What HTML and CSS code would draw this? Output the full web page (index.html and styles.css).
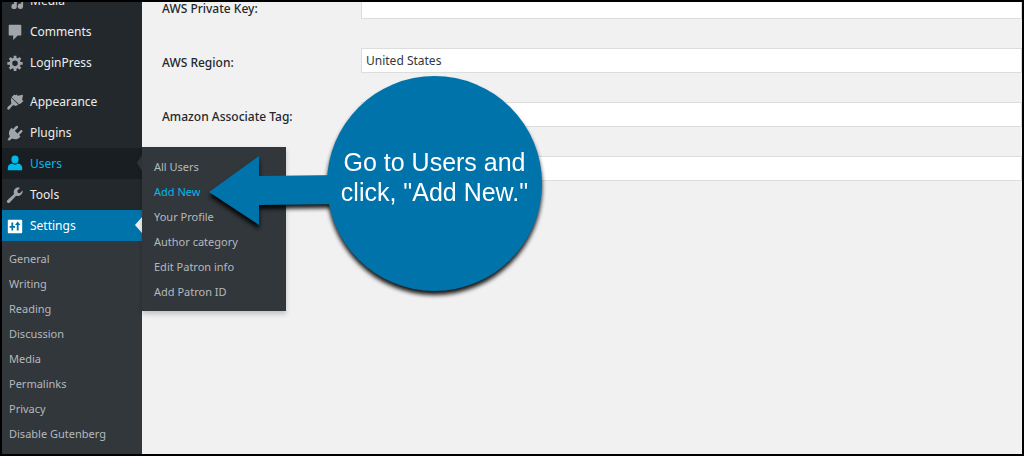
FILE: index.html
```html
<!DOCTYPE html>
<html lang="en">
<head>
    <meta charset="UTF-8">
    <meta name="viewport" content="width=device-width, initial-scale=1.0">
    <title>Settings</title>
    <link rel="stylesheet" href="styles.css">
</head>
<body>
    <nav class="admin-menu">
        <ul class="menu">
            <li>
                <a href="#">
                    <svg class="icon" viewBox="0 0 20 20"><path d="M2 1h8v3H4v4H2zM9 8h10v8a3 3 0 1 1-2-3v-3h-5v6a3 3 0 1 1-3-3z"/></svg>
                    Media
                </a>
            </li>
            <li>
                <a href="#">
                    <svg class="icon" viewBox="0 0 20 20"><path d="M4 2h12q1 0 1 1v10q0 1-1 1h-3l-5 5v-5H4q-1 0-1-1V3q0-1 1-1z"/></svg>
                    Comments
                </a>
            </li>
            <li>
                <a href="#">
                    <svg class="icon" viewBox="0 0 20 20"><path fill-rule="evenodd" d="M18.500 12h-2.400l-.7 1.600 1.700 1.700-2.200 2.200-1.700-1.700-1.600.7v2.400H8.500v-2.400l-1.600-.7-1.700 1.700L3 15.300l1.700-1.700L4 12H1.500V8.800H4l.7-1.600L3 5.500l2.200-2.200L6.900 5l1.600-.7V1.900h3.100v2.400l1.600.7 1.700-1.700 2.200 2.200-1.700 1.700.7 1.600h2.400zM10 13.500a3.100 3.100 0 1 0 0-6.200 3.100 3.100 0 0 0 0 6.200z"/></svg>
                    LoginPress
                </a>
            </li>
            <li class="separator"></li>
            <li>
                <a href="#">
                    <svg class="icon" viewBox="0 0 20 20"><path d="M14.500 12.500 6.100 4.600l3.100-3 1 1 1.500-1 1.300 1.500 6-1.100-1.100 5.500 1.500 1.500-3.400 3zM6 5.500l7.800 7.500-1.800 1c-1.500 1-3-.5-4-.3-1.200.3-2.700 3.300-4.500 4.600-1 .7-2.800-.8-2-2 1.300-2 4.200-3.600 4.500-4.800.2-1.200-1.300-2.500 0-6z"/></svg>
                    Appearance
                </a>
            </li>
            <li>
                <a href="#">
                    <svg class="icon" viewBox="0 0 20 20"><path d="M13 4.500 9.800 7.600l3 2.900 3.100-3.200c.7-.7 1.700-.7 2.100-.2.500.5.400 1.400-.3 2.100l-3.100 3.100 1.500 1.500c-2.500 3-6 4.200-9.200 2.300l-3.400 2.600-1.800-1.600 2.700-3.500C2.300 10.500 3.400 7 6.200 4.200l1.500 1.500 3.100-3.200c.7-.7 1.600-.8 2.200-.2.500.5.700 1.500 0 2.200z"/></svg>
                    Plugins
                </a>
            </li>
            <li class="open">
                <a href="#">
                    <svg class="icon" viewBox="0 0 20 20"><ellipse cx="10" cy="5" rx="4" ry="4.500"/><path d="M7 9.500q3 2.500 6 0 5 1 5 5V17H2v-2.500q0-4 5-5z"/></svg>
                    Users
                </a>
                <ul class="flyout">
                    <li><a href="#">All Users</a></li>
                    <li><a href="#" class="active">Add New</a></li>
                    <li><a href="#">Your Profile</a></li>
                    <li><a href="#">Author category</a></li>
                    <li><a href="#">Edit Patron info</a></li>
                    <li><a href="#">Add Patron ID</a></li>
                </ul>
            </li>
            <li>
                <a href="#">
                    <svg class="icon" viewBox="0 0 20 20"><path d="M16.700 9.800c-1.500 1.500-3.700 1.800-5.500 1l-7 7.400c-.8.800-2 .8-2.700 0s-.7-1.800 0-2.500l7.500-6.900c-.9-1.900-.5-4.100 1-5.600S13.700 1.300 15.500 2.200l-3 3 .6 2.300 2.400.6 2.800-3c.6 1.500-.1 3.300-1.600 4.700z"/></svg>
                    Tools
                </a>
            </li>
            <li class="current">
                <a href="#">
                    <svg class="icon" viewBox="0 0 20 20"><path fill-rule="evenodd" d="M3 3h14q1 0 1 1v13q0 1-1 1H3q-1 0-1-1V4q0-1 1-1zM6 6v4H4v2h2v3h2v-3h2v-2H8V6zM12 15h2V9h2l-3-4-3 4h2z"/></svg>
                    Settings
                </a>
            </li>
        </ul>
        <ul class="submenu">
            <li><a href="#">General</a></li>
            <li><a href="#">Writing</a></li>
            <li><a href="#">Reading</a></li>
            <li><a href="#">Discussion</a></li>
            <li><a href="#">Media</a></li>
            <li><a href="#">Permalinks</a></li>
            <li><a href="#">Privacy</a></li>
            <li><a href="#">Disable Gutenberg</a></li>
        </ul>
    </nav>

    <main class="content">
        <form>
            <div class="row">
                <label for="private-key">AWS Private Key:</label>
                <input type="text" id="private-key">
            </div>
            <div class="row">
                <label for="region">AWS Region:</label>
                <select id="region">
                    <option>United States</option>
                </select>
            </div>
            <div class="row">
                <label for="tag">Amazon Associate Tag:</label>
                <input type="text" id="tag">
            </div>
            <div class="row">
                <label for="extra"></label>
                <input type="text" id="extra" aria-label="Additional value">
            </div>
        </form>
    </main>

    <!-- tutorial bubble over the page -->
    <div class="callout">
        <svg class="arrow" viewBox="0 0 130 72"><path d="M0 37 50 1v20l80-1v29l-80 1v20z"/></svg>
        <p class="bubble">Go to Users and<br>click, "Add New."</p>
    </div>
</body>
</html>
```
FILE: styles.css
```css
* {
    box-sizing: border-box;
}

body {
    font-family: "Noto Sans", "Open Sans", sans-serif;
    font-size: 12px;
    margin: 0;
    height: 100vh;
    border: 2px solid #000;
    background-color: #f1f1f1;
    display: flex;
    overflow: hidden;
    position: relative;
}

ul {
    list-style: none;
    margin: 0;
    padding: 0;
}

a {
    color: #eee;
    text-decoration: none;
}

/* Sidebar */
.admin-menu {
    width: 140px;
    flex-shrink: 0;
    background-color: #23282d;
}

.menu {
    margin-top: -17px;
}

.menu > li {
    position: relative;
}

.menu > li > a {
    display: flex;
    align-items: center;
    gap: 6px;
    height: 31px;
    padding-left: 4px;
}

.icon {
    width: 18px;
    height: 18px;
    fill: #a0a5aa;
}

.menu .separator {
    height: 8px;
}

.menu .open > a {
    background-color: #191e23;
    color: #00b9eb;
}

.open .icon {
    fill: #00b9eb;
}

.menu .current > a {
    background-color: #0073aa;
    color: #fff;
}

.current .icon {
    fill: #fff;
}

.open::after,
.current::after {
    content: "";
    position: absolute;
    right: 0;
    top: 7px;
    border: 8px solid transparent;
    border-left: 0;
    border-right: 7px solid #f1f1f1;
}

.open::after {
    border-right: 5px solid #32373c;
}

.submenu,
.flyout {
    font-size: 11px;
    line-height: 25px;
    background-color: #32373c;
}

.submenu {
    padding: 5px 7px 20px;
}

.submenu a,
.flyout a {
    color: #b4b9be;
}

.flyout {
    position: absolute;
    left: 100%;
    top: -1px;
    width: 144px;
    padding: 7px 12px;
    box-shadow: 0 3px 5px rgba(0, 0, 0, 0.2);
    z-index: 1;
}

.flyout .active {
    color: #00b9eb;
}

/* Settings form */
.content {
    flex: 1;
    padding-left: 20px;
}

form {
    display: grid;
    gap: 29px;
    margin-top: -8px;
}

.row {
    display: grid;
    grid-template-columns: 199px 1fr;
    align-items: center;
    height: 25px;
}

label {
    padding-top: 3px;
    color: #23282d;
    font-weight: 500;
}

input,
select {
    appearance: none;
    width: 100%;
    height: 25px;
    margin: 0;
    padding: 0 4px;
    border: 1px solid #ddd;
    border-radius: 0;
    background-color: #fff;
    color: #32373c;
    font-family: inherit;
    font-size: 12px;
}

/* Callout */
.callout {
    position: absolute;
    left: 207px;
    top: 74px;
    display: flex;
    filter: drop-shadow(0 4px 2px rgba(0, 0, 0, 0.9));
    z-index: 2;
}

.arrow {
    width: 130px;
    height: 72px;
    margin-top: 79px;
    margin-right: -12px;
    fill: #0073aa;
}

.bubble {
    width: 215px;
    height: 215px;
    margin: 0;
    padding-top: 71px;
    border-radius: 50%;
    background-color: #0073aa;
    color: #fff;
    font-family: "Liberation Sans", Arial, sans-serif;
    font-size: 25px;
    line-height: 30px;
    text-align: center;
}
```
